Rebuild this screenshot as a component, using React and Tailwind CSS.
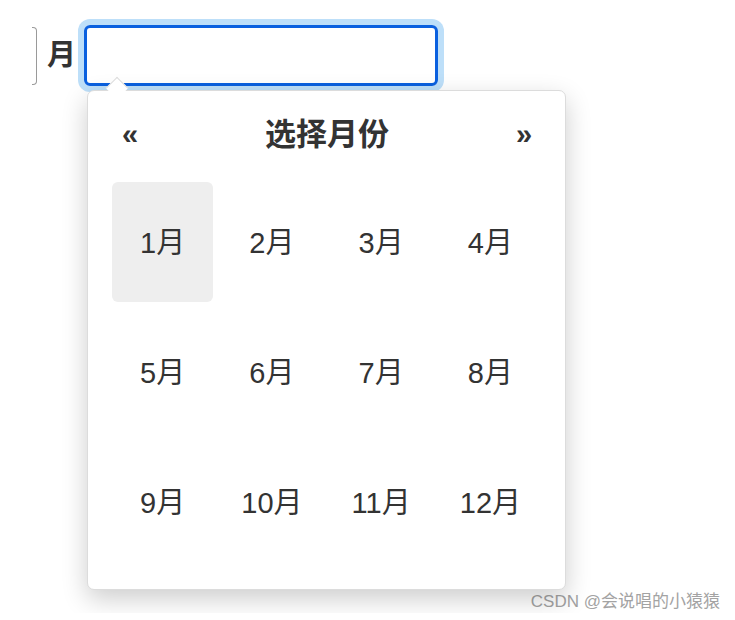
import React, { useState } from 'react';

const months = ['1月', '2月', '3月', '4月', '5月', '6月', '7月', '8月', '9月', '10月', '11月', '12月'];

const MonthPicker = () => {
  const [selected, setSelected] = useState(0);

  return (
    <div className="absolute left-[3px] top-[65px] z-10 w-[479px] h-[500px] bg-white border border-[#dcdcdc] rounded-[7px] shadow-[0_9px_26px_rgba(0,0,0,0.2)] px-6 pt-[22px]">
      {/* little caret pointing at the input */}
      <div className="absolute left-[21px] top-[-11px] w-[16px] h-[16px] rotate-45 bg-white border-l border-t border-[#dcdcdc]" />
      <div className="relative flex items-center justify-between h-[42px] pl-[10px] pr-[9px] text-[#333]">
        <span className="text-[29px] font-bold leading-none">«</span>
        <span className="text-[31px] font-bold leading-none">选择月份</span>
        <span className="text-[29px] font-bold leading-none">»</span>
      </div>
      <div className="grid grid-cols-4 gap-x-[8px] gap-y-[10px] mt-[27px]">
        {months.map((m, i) => (
          <div
            key={m}
            onClick={() => setSelected(i)}
            className={
              i === selected
                ? 'h-[120px] flex items-center justify-center pt-[4px] rounded-[6px] bg-[#eeeeee] text-[29px] text-[#333]'
                : 'h-[120px] flex items-center justify-center pt-[4px] rounded-[6px] text-[29px] text-[#333]'
            }
          >
            {m}
          </div>
        ))}
      </div>
    </div>
  );
};

export default function App() {
  return (
    <div
      className="relative h-[613px] overflow-hidden bg-white"
      style={{ fontFamily: '"Liberation Sans", "Noto Sans CJK SC", sans-serif' }}
    >
      <div className="flex items-center pl-[32px] pt-[25px]">
        <div className="w-[5px] h-[58px] border border-l-0 border-[#9a9a9a] rounded-r-[4px]" />
        <span className="ml-[10px] text-[29px] font-bold text-[#333] leading-none">月</span>
        <div className="relative ml-[8px]">
          <input
            type="text"
            className="block w-[354px] h-[61px] border-[3px] border-[#0a60df] rounded-[6px] ring-[6px] ring-[#bddff9] outline-none px-3 text-[24px]"
          />
          <MonthPicker />
        </div>
      </div>
      <div className="absolute right-[15px] top-[593px] text-[17px] text-[#a3a3a3] leading-none [text-shadow:0_0_2px_#fff]">
        CSDN @会说唱的小猿猿
      </div>
    </div>
  );
}
